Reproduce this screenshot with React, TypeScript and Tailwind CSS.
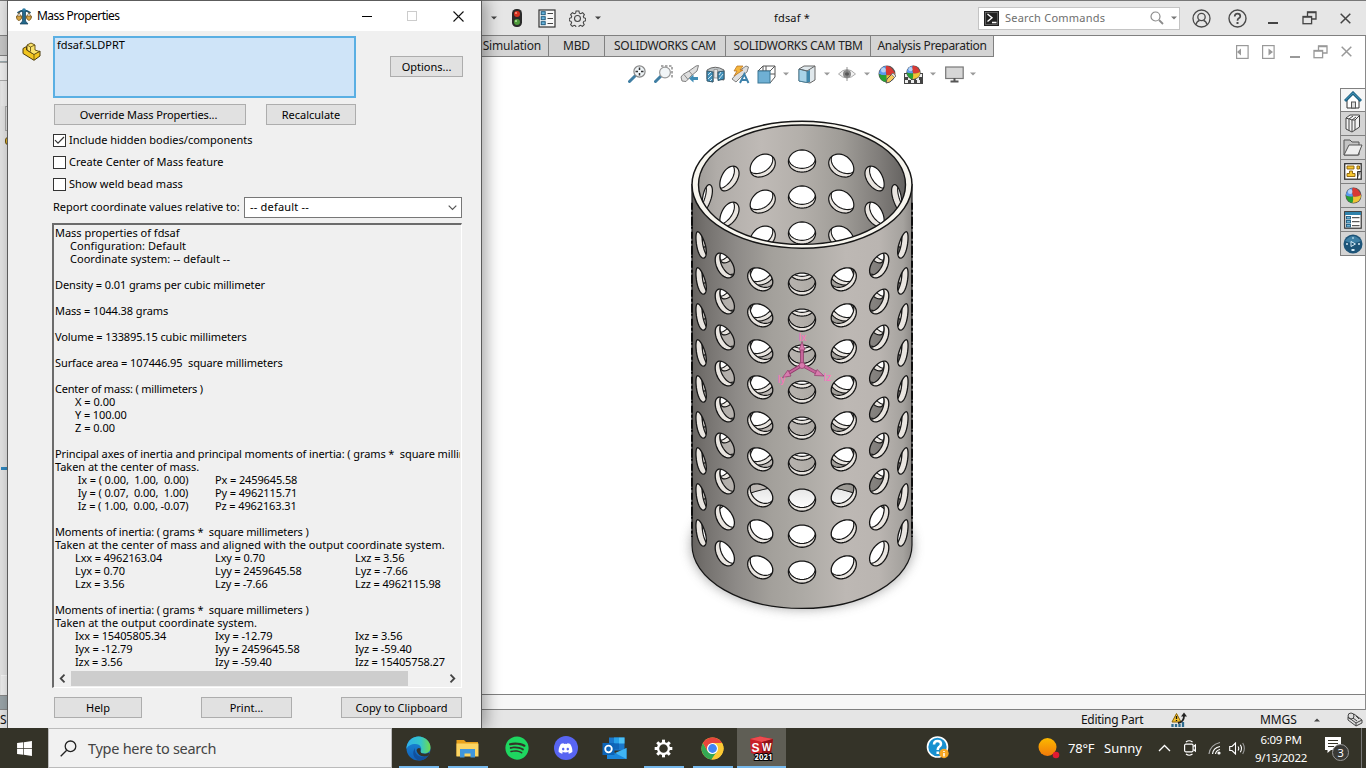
import React from "react";
import { FaWindows, FaSpotify, FaDiscord } from "react-icons/fa";

/* ---------- perforated tube geometry ---------- */
const CX = 802;
const TOP = 184.7;
const R_OUT = 110;
const R_IN = 103.5;
const TILT = 0.577;
const PITCH = 36;
const HOLE = 13.6;
const HEIGHT = 360.3;

function contour(theta: number, row: number, radius: number) {
  let d = "";
  for (let i = 0; i < 40; i++) {
    const a = (i / 40) * Math.PI * 2;
    const phi = theta + Math.asin((HOLE * Math.cos(a)) / radius);
    const x = CX + radius * Math.sin(phi);
    const y = TOP + row * PITCH + radius * TILT * Math.cos(phi) + HOLE * 0.816 * Math.sin(a);
    d += (i ? "L" : "M") + x.toFixed(2) + " " + y.toFixed(2);
  }
  return d + "Z";
}

type Hole = { key: string; outer: string; inner: string };
function holes(angles: number[]): Hole[] {
  const list: Hole[] = [];
  for (const deg of angles) {
    const t = (deg * Math.PI) / 180;
    for (let row = 1; row <= 9; row++) {
      list.push({ key: `h${deg}r${row}`.replace("-", "m").replace(".", "_"), outer: contour(t, row, R_OUT), inner: contour(t, row, R_IN) });
    }
  }
  return list;
}
const FRONT = holes([-67.5, -45, -22.5, 0, 22.5, 45, 67.5]);
const BACK = holes([112.5, 135, 157.5, 180, 202.5, 225, 247.5]);

function Tube() {
  const bottom = TOP + HEIGHT;
  const ryO = R_OUT * TILT;
  const ryI = R_IN * TILT;
  return (
    <svg className="mt-3 ml-[188px] shrink-0" width="264" height="530" viewBox="670 100 264 530">
      <defs>
        <linearGradient id="skin" x1="0" x2="1" y1="0" y2="0">
          <stop offset="0" stopColor="#65625f" />
          <stop offset="0.06" stopColor="#74716e" />
          <stop offset="0.2" stopColor="#8d8a87" />
          <stop offset="0.36" stopColor="#a3a09b" />
          <stop offset="0.52" stopColor="#aeaba6" />
          <stop offset="0.7" stopColor="#bdb8b4" />
          <stop offset="0.85" stopColor="#bab5b1" />
          <stop offset="0.96" stopColor="#a5a29e" />
          <stop offset="1" stopColor="#8d8a87" />
        </linearGradient>
        <linearGradient id="bore" x1="0" x2="1" y1="0" y2="0">
          <stop offset="0" stopColor="#9a9793" />
          <stop offset="0.12" stopColor="#b0aca8" />
          <stop offset="0.32" stopColor="#bfbab6" />
          <stop offset="0.5" stopColor="#b3afaa" />
          <stop offset="0.68" stopColor="#9f9c97" />
          <stop offset="0.85" stopColor="#7f7c79" />
          <stop offset="1" stopColor="#5c5a58" />
        </linearGradient>
        <linearGradient id="floor" x1="0" x2="0" y1="0" y2="1">
          <stop offset="0" stopColor="#e2e2e2" />
          <stop offset="0.2" stopColor="#ffffff" />
        </linearGradient>
        <filter id="soft" x="-20%" y="-30%" width="140%" height="160%">
          <feGaussianBlur stdDeviation="6" />
        </filter>
        <clipPath id="mouth">
          <ellipse cx={CX} cy={TOP} rx={R_IN} ry={ryI} />
        </clipPath>
        <clipPath id="outerSet">
          <path d={FRONT.map((h) => h.outer).join("")} />
        </clipPath>
        <clipPath id="innerSet">
          <path d={FRONT.map((h) => h.inner).join("")} />
        </clipPath>
        {BACK.map((h) => (
          <clipPath key={h.key} id={h.key}>
            <path d={h.inner} />
          </clipPath>
        ))}
        <g id="cavity">
          <rect x="690" y="120" width="224" height="490" fill="url(#bore)" />
          {BACK.map((h) => (
            <g key={h.key}>
              <path d={h.inner} fill="#e9e5e0" />
              <g clipPath={`url(#${h.key})`}>
                <path d={h.outer} fill="#fff" stroke="#161616" strokeWidth="1.1" />
              </g>
              <path d={h.inner} fill="none" stroke="#161616" strokeWidth="1.2" />
            </g>
          ))}
          <ellipse cx={CX} cy={bottom} rx={R_IN} ry={ryI} fill="url(#floor)" stroke="#161616" strokeWidth="1.1" />
        </g>
      </defs>

      <ellipse cx={CX} cy={bottom + 1} rx="111" ry="63" fill="#8a8a8a" opacity="0.75" filter="url(#soft)" />
      <path
        d={`M${CX - R_OUT} ${TOP}V${bottom}A${R_OUT} ${ryO} 0 0 0 ${CX + R_OUT} ${bottom}V${TOP}Z`}
        fill="url(#skin)"
        stroke="#161616"
        strokeWidth="1.2"
      />
      <path d={`M${CX - R_OUT} ${TOP + 18}V${bottom - 8}M${CX + R_OUT} ${TOP + 18}V${bottom - 8}`} stroke="#0c0c0c" strokeWidth="1.9" strokeDasharray="7 2 3 2 9 1 2 3" />
      <ellipse cx={CX} cy={TOP} rx={R_OUT} ry={ryO} fill="#f7f5ee" stroke="#161616" strokeWidth="1.5" />
      <g clipPath="url(#mouth)">
        <use href="#cavity" />
      </g>
      <ellipse cx={CX} cy={TOP} rx={R_IN} ry={ryI} fill="none" stroke="#161616" strokeWidth="1.4" />

      <path d={FRONT.map((h) => h.outer).join("")} fill="#e9e5e0" />
      <g clipPath="url(#outerSet)">
        <g clipPath="url(#innerSet)">
          <use href="#cavity" />
        </g>
        <path d={FRONT.map((h) => h.inner).join("")} fill="none" stroke="#161616" strokeWidth="1.2" />
      </g>
      <path d={FRONT.map((h) => h.outer).join("")} fill="none" stroke="#161616" strokeWidth="1.3" />

      <g stroke="#8f3768" strokeWidth="3.6">
        <path d="M802 365V349M802 365L787 374M802 365L817 373" />
      </g>
      <g stroke="#c7659c" strokeWidth="2">
        <path d="M802 365V349M802 365L787 374M802 365L817 373" />
      </g>
      <g fill="#d87bae" stroke="#8f3768" strokeWidth="0.7">
        <path d="M799 350L802 341.500L805 350Z" />
        <path d="M788 370L791 376L782.500 377.500Z" />
        <path d="M817 369.500L814.500 375.500L824 376Z" />
        <circle cx="802" cy="365.500" r="3" />
      </g>
      <g fill="#ff6fc0" fontFamily="Liberation Sans, sans-serif" fontSize="10">
        <text x="798.500" y="340.500">Ix</text>
        <text x="777.500" y="383">Iy</text>
        <text x="823.500" y="381">Iz</text>
      </g>
    </svg>
  );
}

/* ---------- small shared pieces ---------- */
function Caret({ className = "", up = false, fill = "#555" }: { className?: string; up?: boolean; fill?: string }) {
  return (
    <svg className={className} width="6" height="4" viewBox="0 0 6 4">
      <path d={up ? "M0 3.500L3 0.500L6 3.500Z" : "M0 0.500L3 3.500L6 0.500Z"} fill={fill} />
    </svg>
  );
}

function Ball({ size = 18, cx = 0 }: { size?: number; cx?: number }) {
  return (
    <svg width={size} height={size} viewBox="0 0 18 18">
      <circle cx="9" cy="9" r="8.500" fill="#555" />
      <path d="M8 1A8 8 0 0 0 1 9Q5 11 8.500 10Q7 5 8 1Z" fill="#5b9bee" />
      <path d="M8 1Q13 0 17 8.500Q13 11 8.500 10Q7 5 8 1Z" fill="#d93a35" />
      <path d="M1 9Q5 11 8.500 10Q9 14 8 17Q2 16 1 9Z" fill="#27a234" />
      <path d="M8 17Q9 14 8.500 10Q13 11 17 8.500Q17 16 8 17Z" fill="#f0c436" />
      <circle cx={5.5 + cx} cy="5" r="2.500" fill="#fff" opacity="0.55" />
    </svg>
  );
}

function Cell({ w, children }: { w: string; children?: React.ReactNode }) {
  return <div className={`flex h-full shrink-0 items-center justify-center ${w}`}>{children}</div>;
}

const Lens = () => <path d="M7 11L1.500 16.500" stroke="#3f7ea3" strokeWidth="3" strokeLinecap="round" />;

/* ---------- application window ---------- */
function TitleBar() {
  return (
    <header className="flex h-9 shrink-0 items-center border-t border-b border-t-[#777] border-b-[#808080] bg-[#e6e6e6] pl-[484px]">
      <Cell w="w-[20px]"><Caret fill="#444" /></Cell>
      <Cell w="w-[26px]">
        <svg width="12" height="20" viewBox="0 0 12 20">
          <rect x="1" y="1" width="10" height="18" rx="4.500" fill="#2b2b2b" />
          <circle cx="6" cy="6" r="3" fill="#d5311f" />
          <circle cx="6" cy="14" r="3" fill="#4d9a3a" />
          <circle cx="5" cy="5" r="1" fill="#ff9a85" /><circle cx="5" cy="13" r="1" fill="#b8e59f" />
        </svg>
      </Cell>
      <Cell w="w-[34px]">
        <svg width="18" height="19" viewBox="0 0 18 19">
          <rect x="1" y="1" width="16" height="17" fill="#f8f8f8" stroke="#333" strokeWidth="1.200" />
          {[3, 8, 13].map((y) => (
            <g key={y}>
              <rect x="3.200" y={y - 0.3} width="4" height="3" fill="#68b3dc" stroke="#1f5a7d" />
              <path d={`M9.500 ${y + 1.5}H15`} stroke="#444" />
            </g>
          ))}
        </svg>
      </Cell>
      <Cell w="w-[26px]">
        <svg width="17" height="17" viewBox="0 0 24 24" fill="none" stroke="#444" strokeWidth="1.500">
          <path d="M10 1.500h4l.7 3 1.800.8 2.700-1.500 2.500 2.700-1.500 2.600.8 1.900 2.500.8v3.400l-2.600.8-.8 1.900 1.400 2.700-2.500 2.500-2.700-1.500-1.900.8-.8 2.600h-3.600l-.7-2.600-1.900-.8-2.700 1.500-2.400-2.500 1.400-2.700-.8-1.900-2.500-.8v-3.400l2.600-.8.8-1.900-1.500-2.600 2.500-2.700 2.700 1.500 1.800-.8z" />
          <circle cx="12" cy="12" r="4.200" />
        </svg>
      </Cell>
      <Cell w="w-[16px]"><Caret fill="#444" /></Cell>
      <div className="flex w-[372px] justify-center pl-0 text-[11px] tracking-[0.2px] text-[#111]">fdsaf *</div>
      <div className="flex h-[23px] w-[202px] items-center border border-[#c4c4c4] bg-white pl-[5px]">
        <svg width="15" height="15" viewBox="0 0 15 15">
          <rect width="15" height="15" fill="#222" />
          <rect x="1.500" y="1.500" width="12" height="12" fill="none" stroke="#777" strokeWidth="0.700" />
          <path d="M3.500 3L8 6.700L3.500 10.500M8 11.500H12.500" stroke="#fff" strokeWidth="1.400" fill="none" />
        </svg>
        <span className="ml-[6px] w-[145px] text-[11px] tracking-[0.220px] text-[#6e6e6e]">Search Commands</span>
        <svg width="14" height="14" viewBox="0 0 14 14" fill="none" stroke="#8b8b8b" strokeWidth="1.200">
          <circle cx="5.500" cy="5.500" r="4.500" /><path d="M9 9L13 13" strokeWidth="1.800" />
        </svg>
        <Caret className="ml-[7px]" fill="#777" />
      </div>
      <Cell w="w-[42px]">
        <svg width="19" height="19" viewBox="0 0 19 19" fill="none" stroke="#4a4a4a" strokeWidth="1.300">
          <circle cx="9.500" cy="9.500" r="8.500" /><circle cx="9.500" cy="8" r="3.700" /><path d="M4 15.500Q5 12 7.500 11.500M15 15.500Q14 12 11.500 11.500" />
        </svg>
      </Cell>
      <Cell w="w-[30px]">
        <svg width="19" height="19" viewBox="0 0 19 19" fill="none" stroke="#4a4a4a" strokeWidth="1.400">
          <circle cx="9.500" cy="9.500" r="8.500" /><path d="M6.700 7.500Q6.700 4.700 9.500 4.700T12.300 7.200Q12.300 8.500 10.500 9.500Q9.500 10.200 9.500 11.700" strokeWidth="1.700" /><path d="M9.500 13V15" strokeWidth="2" />
        </svg>
      </Cell>
      <Cell w="w-[42px]"><div className="mt-[10px] h-[2px] w-[10px] bg-[#444]" /></Cell>
      <Cell w="w-[31px]"><Restore color="#444" /></Cell>
      <Cell w="w-[40px]"><Cross color="#444" /></Cell>
    </header>
  );
}

function Restore({ color }: { color: string }) {
  return (
    <svg width="15" height="14" viewBox="0 0 15 14" fill="none" stroke={color} strokeWidth="1.300">
      <path d="M5.500 5V1H14V8H9.800" /><rect x="1" y="5.500" width="8.600" height="7.200" /><path d="M5.500 1.500H14M1 6H9.600" />
    </svg>
  );
}
function Cross({ color }: { color: string }) {
  return (
    <svg width="11" height="11" viewBox="0 0 11 11" stroke={color} strokeWidth="1.500"><path d="M0.700 0.700L10.300 10.300M10.300 0.700L0.700 10.300" /></svg>
  );
}

function Tabs() {
  const tab = "flex h-full items-center justify-center border-r border-b border-[#808080] bg-[#d4d4d4] text-[12px] text-[#222] whitespace-nowrap";
  return (
    <div className="flex h-[21px] shrink-0">
      <div className={`${tab} w-[67px] justify-end! pr-[7px] tracking-[-0.2px]`}>Simulation</div>
      <div className={`${tab} w-[56px] tracking-[-0.2px]`}>MBD</div>
      <div className={`${tab} w-[121px] tracking-[-0.3px]`}>SOLIDWORKS CAM</div>
      <div className={`${tab} w-[145px] tracking-[-0.300px]`}>SOLIDWORKS CAM TBM</div>
      <div className={`${tab} w-[123px] tracking-[-0.3px]`}>Analysis Preparation</div>
      <div className="ml-[241px] flex items-start pt-[10px]">
        <Cell w="w-[15px]">
          <svg width="13" height="14" viewBox="0 0 13 14"><rect x="0.600" y="0.600" width="11.500" height="12.800" fill="none" stroke="#999" strokeWidth="1.200" /><path d="M1 7L5 3.500V10.500Z" fill="#999" /></svg>
        </Cell>
        <Cell w="w-[37px]">
          <svg width="13" height="14" viewBox="0 0 13 14"><rect x="0.600" y="0.600" width="11.500" height="12.800" fill="none" stroke="#999" strokeWidth="1.200" /><path d="M11 7L6.500 3.500V10.500Z" fill="#999" /></svg>
        </Cell>
        <Cell w="w-[15px]"><div className="mt-[11px] h-[2px] w-[10px] bg-[#999]" /></Cell>
        <Cell w="w-[37px]"><Restore color="#999" /></Cell>
        <Cell w="w-[14px]"><Cross color="#999" /></Cell>
      </div>
    </div>
  );
}

function ViewToolbar() {
  return (
    <div className="flex h-[31px] shrink-0 items-center pb-0 pl-[142px] pt-[3px]">
      <Cell w="w-[26px]">
        <svg width="18" height="18" viewBox="0 0 18 18" fill="none"><Lens /><circle cx="11.500" cy="6.500" r="5.600" fill="#eef3f6" stroke="#888" strokeWidth="1.200" /><path d="M11.500 2.500V5M11.500 8V10.500M7.500 6.500H10M13 6.500H15.500" stroke="#333" strokeWidth="1.500" /></svg>
      </Cell>
      <Cell w="w-[26px]">
        <svg width="19" height="19" viewBox="0 0 19 19" fill="none"><path d="M7 1H18V13" stroke="#555" strokeDasharray="2.500 1.500" /><Lens /><circle cx="11" cy="7.500" r="5.400" fill="#f1f5f7" stroke="#999" strokeWidth="1.200" /></svg>
      </Cell>
      <Cell w="w-[26px]">
        <svg width="19" height="19" viewBox="0 0 19 19"><path d="M1 12L3 9.500L9 6L16 1L18.500 0.500L17 6L11 11L6 16.500L2 16Z" fill="#dedede" stroke="#808080" /><path d="M4 9.500L8 14.500M9 6L12.500 10" stroke="#888" /><path d="M18 12V15H13.500V17.500L9 13.500L13.500 9.500V12Z" fill="#3f8cb5" /></svg>
      </Cell>
      <Cell w="w-[26px]">
        <svg width="19" height="17" viewBox="0 0 19 17"><path d="M1 4Q9 -1.500 18 4V14L12 13V6H7V16L1 13Z" fill="#bfc5c8" stroke="#666" /><path d="M8 3.500H11.500V12H8Z" fill="#e6e6e6" stroke="#888" strokeWidth="0.700" /><path d="M1 5L7 6V16L1 15Z" fill="#4191bb" stroke="#35596c" /><path d="M12 6L18 5V13L12 14.500Z" fill="#4191bb" stroke="#35596c" /><path d="M2 9L5 6M2 13L6 9M4 15L6 13M13 9L15 6M13 13L17 8" stroke="#cfe6f2" /></svg>
      </Cell>
      <Cell w="w-[25px]">
        <svg width="19" height="19" viewBox="0 0 19 19"><path d="M1 14L8 6L15 1L17.500 2L16 7L11 11L5 17Z" fill="#dedede" stroke="#808080" /><path d="M6 1H12L9 5H12L3 11L6 6H3Z" fill="#f4b53c" stroke="#b36b1c" strokeWidth="0.700" /><path d="M9 18L13.300 9L17.500 18M10.500 15H16" fill="none" stroke="#3c81aa" strokeWidth="1.900" /></svg>
      </Cell>
      <Cell w="w-[27px]">
        <svg width="19" height="19" viewBox="0 0 19 19" fill="none"><path d="M1 6L6 1H18V12L13 18M6 1V6M1 6H13L18 1M9 1V9M13 9H18" stroke="#555" /><rect x="1" y="6" width="12" height="12" fill="#6fb0d4" stroke="#3b7795" /></svg>
      </Cell>
      <Cell w="w-[12px]"><Caret fill="#999" /></Cell>
      <Cell w="w-[30px]">
        <svg width="18" height="19" viewBox="0 0 18 19"><path d="M1 4L6 1H17V15L12 18L1 16Z" fill="#e0e8ec" stroke="#666" /><path d="M1 4L9 6V17.500L1 16Z" fill="#a9d3e8" stroke="#467e99" /><path d="M9 6L12 5V17L9 17.500Z" fill="#3f86ab" /><path d="M1 4L9 6L17 1" fill="none" stroke="#666" /></svg>
      </Cell>
      <Cell w="w-[10px]"><Caret fill="#999" /></Cell>
      <Cell w="w-[30px]">
        <svg width="18" height="14" viewBox="0 0 18 14"><path d="M0.500 7Q9 -2 17.500 7Q9 15 0.500 7Z" fill="#f1f1f1" stroke="#aaa" /><circle cx="9" cy="7" r="4" fill="#888" /><circle cx="9" cy="7" r="1.800" fill="#444" /><path d="M9 0V14" stroke="#777" strokeWidth="0.800" /></svg>
      </Cell>
      <Cell w="w-[10px]"><Caret fill="#999" /></Cell>
      <Cell w="w-[30px]">
        <div className="relative"><Ball size={18} />
          <svg className="absolute left-[7px] top-[7px]" width="12" height="12" viewBox="0 0 12 12"><path d="M1 11L2 7L8 1L11 4L5 10Z" fill="#f6c95c" stroke="#555" /><path d="M8 1L11 4L9.500 5.500L6.500 2.500Z" fill="#e8e0d8" stroke="#666" strokeWidth="0.600" /></svg>
        </div>
      </Cell>
      <Cell w="w-[23px]">
        <div className="relative h-[19px] w-[19px]">
          <svg className="absolute left-0 top-[8px]" width="19" height="11" viewBox="0 0 19 11"><rect width="19" height="11" fill="#444" /><path d="M1 1H4V4H1ZM4 4H7V7H4ZM1 7H4V10H1ZM7 7H10V10H7ZM13 7H16V10H13ZM12 4H15V7H12ZM15 1H18V4H15Z" fill="#eee" /></svg>
          <div className="absolute left-[2px] top-0"><Ball size={15} /></div>
        </div>
      </Cell>
      <Cell w="w-[16px]"><Caret fill="#999" /></Cell>
      <Cell w="w-[26px]">
        <svg width="19" height="17" viewBox="0 0 19 17"><rect x="0.700" y="1" width="17.500" height="11.500" fill="#d6d6d6" stroke="#777" strokeWidth="1.200" /><path d="M9.500 12V15M5.500 15.500H13.500" stroke="#555" strokeWidth="2" /></svg>
      </Cell>
      <Cell w="w-[12px]"><Caret fill="#999" /></Cell>
    </div>
  );
}

function TaskPane() {
  const cell = "flex h-[24px] w-full items-center justify-center border-b border-[#808080] bg-[#d4d4d4]";
  return (
    <div className="ml-auto flex w-[25px] flex-col self-start border-t border-l border-[#808080]">
      <div className="flex h-[23px] w-full items-center justify-center border-b border-[#808080] bg-[#f6f6f6]">
        <svg width="18" height="18" viewBox="0 0 18 18"><path d="M3 9V17H15V9L9 3Z" fill="#fff" stroke="#333" /><rect x="7.500" y="11" width="4" height="6" fill="#ddd" stroke="#555" /><path d="M1 10L9 2L17 10" fill="none" stroke="#1b5f80" strokeWidth="3" /><path d="M1.500 9L9 1.800L16.500 9" fill="none" stroke="#4fa5cb" strokeWidth="0.900" /></svg>
      </div>
      <div className={cell}>
        <svg width="16" height="19" viewBox="0 0 16 19" fill="#f2f2f2" stroke="#444"><path d="M1 4L5 1H14.500V13L7 18L1 15Z" /><path d="M1 4L4 5V16.500M4 5L8 2M4.500 5L7 6V17.500M7 6L11 3M7.500 6H10V16M10 6L14.500 1.500" fill="none" /></svg>
      </div>
      <div className={cell}>
        <svg width="20" height="17" viewBox="0 0 20 17" stroke="#555" strokeLinejoin="round"><path d="M1 16V1H7L9 3H16V16Z" fill="#c4c4c4" /><path d="M1 16L6 6H19L15 16Z" fill="#eee" /></svg>
      </div>
      <div className={cell}>
        <svg width="18" height="17" viewBox="0 0 18 17"><rect x="0.700" y="0.700" width="16.500" height="15.500" fill="#fff" stroke="#333" strokeWidth="1.300" /><path d="M3 3H10V6H3ZM13 3H15.500V6H13ZM5.500 8H8.500V10.500H11V13.500H3V10.500H5.500Z" fill="#f6c730" stroke="#88600c" strokeWidth="0.900" /><path d="M13.500 16V8.500H17" fill="#888" stroke="#333" /></svg>
      </div>
      <div className={cell}><Ball size={17} /></div>
      <div className={cell}>
        <svg width="18" height="18" viewBox="0 0 18 18"><rect x="0.700" y="0.700" width="16.500" height="16.500" fill="#fff" stroke="#333" strokeWidth="1.200" /><rect x="1" y="1" width="16" height="3" fill="#2f82ab" />{[6, 10, 14].map((y) => <g key={y}><rect x="2.500" y={y - 0.5} width="4" height="2.500" fill="#6db7da" stroke="#1f5a7d" strokeWidth="0.900" /><path d={`M8 ${y + 0.7}H15.500`} stroke="#333" /></g>)}</svg>
      </div>
      <div className={cell}>
        <svg width="20" height="20" viewBox="0 0 20 20"><circle cx="10" cy="10" r="9.500" fill="#1d5478" /><path d="M2 7Q10 -3 18 7Q10 11 2 7Z" fill="#4c91b8" opacity="0.700" /><path d="M8 7.500V12.500L12.500 10Z" fill="none" stroke="#d4eaf5" /><circle cx="4" cy="10" r="1" fill="#d4eaf5" /><circle cx="16" cy="10" r="1" fill="#d4eaf5" /><rect x="8.500" y="15" width="3" height="2" fill="#d4eaf5" /><circle cx="10" cy="4" r="1" fill="#a9cfe2" /></svg>
      </div>
    </div>
  );
}

function LeftEdge() {
  return (
    <div className="flex w-[482px] shrink-0 flex-col bg-[#e4e4e4]">
      <div className="h-[21px] border-b border-[#808080] bg-[#c6c6c6]" />
      <div className="h-[6px] border-b border-[#9aa9ae] bg-[#eaeaea]" />
      <div className="h-[20px] border-t border-b border-[#aaa] bg-[#eee]" />
      <div className="ml-[1px] h-[26px] bg-[#eaeaea]" />
      <div className="ml-[5px] h-[26px] border border-[#aaa] bg-[#e0e0e0]" />
      <div className="mt-[6px] ml-[5px] h-[8px] w-[6px] rounded-full border border-[#6a5210] bg-[#e5b62c]" />
      <div className="mt-[322px] ml-[1px] h-[3px] bg-[#2f86bd]" />
      <div className="mt-[205px] ml-[1px] h-[21px] border-t border-[#f8f8f8] bg-[#eee]" />
      <div className="h-[16px] border-t border-b border-[#888] bg-[#9aa4a8]" />
    </div>
  );
}

function StatusBar() {
  return (
    <div className="flex h-[18px] shrink-0 items-center bg-[#e5e5e5] pt-px text-[12px] text-[#111]">
      <span className="w-[1081px]">S</span>
      <span className="w-[90px] tracking-[-0.300px]">Editing Part</span>
      <svg width="16" height="16" viewBox="0 0 16 16"><path d="M1 10L5.500 1.500L10 10Z" fill="#f5c32c" stroke="#8a650a" /><path d="M5.500 4V7M5.500 8V9" stroke="#111" strokeWidth="1.300" /><path d="M7 11Q13 10 13 4" fill="none" stroke="#222" strokeWidth="1.800" /><path d="M10 4.500L13 0.500L16 4.500Z" fill="#222" /><path d="M1.500 12V15M5 12V15M8.500 12V15M12 10V15" stroke="#2e6d90" strokeWidth="2.300" /></svg>
      <span className="ml-[73px] w-[54px] tracking-[-0.100px]">MMGS</span>
      <Caret up fill="#444" />
      <svg className="ml-[27px]" width="16" height="15" viewBox="0 0 16 15" fill="#ddd" stroke="#444"><path d="M1 5L7 2L15 8V11L9 14L1 8Z" /><circle cx="4" cy="4" r="3" /><path d="M1 5L9 11L15 8M9 11V14M6 6L10 9M9 4L12 7" fill="none" /></svg>
    </div>
  );
}

/* ---------- mass properties dialog ---------- */
function Btn({ className, children }: { className: string; children: React.ReactNode }) {
  return (
    <button className={`flex h-[21px] shrink-0 items-center justify-center border border-[#adadad] bg-[#e1e1e1] pt-[1px] ${className}`}>
      <span className="whitespace-nowrap">{children}</span>
    </button>
  );
}

function Check({ label, on = false }: { label: string; on?: boolean }) {
  return (
    <label className="flex h-[22px] items-center">
      <span className="flex h-[13px] w-[13px] items-center justify-center border border-[#333] bg-white">
        {on && <svg width="11" height="9" viewBox="0 0 11 9"><path d="M1 4.200L4 7.200L10 1" fill="none" stroke="#333" strokeWidth="1.200" /></svg>}
      </span>
      <span className="ml-[3px]">{label}</span>
    </label>
  );
}

const L = ({ t, className = "tracking-[-0.1px]" }: { t?: string; className?: string }) => (
  <div className={`h-[13px] whitespace-pre leading-[13px] ${className}`}>{t}</div>
);
const Row3 = ({ a, b, c }: { a: string; b: string; c: string }) => (
  <div className="grid h-[13px] grid-cols-[140px_140px_140px] pl-[20px] leading-[13px] tracking-[-0.12px]">
    <span className="whitespace-pre">{a}</span><span>{b}</span><span>{c}</span>
  </div>
);

function Report() {
  return (
    <div className="flex h-[465px] w-[410px] flex-col border-t-2 border-l-2 border-r border-b border-t-[#6b6b6b] border-l-[#6b6b6b] border-r-white border-b-white">
      <div className="h-[445px] w-[406px] overflow-hidden pt-[1px] pl-[1px]">
        <L t="Mass properties of fdsaf" className="tracking-[-0.02px]" />
        <L t="Configuration: Default" className="pl-[15px] tracking-[0.05px]" />
        <L t="Coordinate system: -- default --" className="pl-[15px] tracking-[0.03px]" />
        <L />
        <L t="Density = 0.01 grams per cubic millimeter" />
        <L />
        <L t="Mass = 1044.38 grams" />
        <L />
        <L t="Volume = 133895.15 cubic millimeters" />
        <L />
        <L t="Surface area = 107446.95  square millimeters" />
        <L />
        <L t="Center of mass: ( millimeters )" className="tracking-[-0.2px]" />
        <L t="X = 0.00" className="pl-[20px]" />
        <L t="Y = 100.00" className="pl-[20px] tracking-[-0.1px]" />
        <L t="Z = 0.00" className="pl-[20px]" />
        <L />
        <L t="Principal axes of inertia and principal moments of inertia: ( grams *  square millimeters )" />
        <L t="Taken at the center of mass." className="tracking-[-0.03px]" />
        <Row3 a=" Ix = ( 0.00,  1.00,  0.00)" b="Px = 2459645.58" c="" />
        <Row3 a=" Iy = ( 0.07,  0.00,  1.00)" b="Py = 4962115.71" c="" />
        <Row3 a=" Iz = ( 1.00,  0.00, -0.07)" b="Pz = 4962163.31" c="" />
        <L />
        <L t="Moments of inertia: ( grams *  square millimeters )" className="tracking-[-0.14px]" />
        <L t="Taken at the center of mass and aligned with the output coordinate system." className="tracking-normal" />
        <Row3 a="Lxx = 4962163.04" b="Lxy = 0.70" c="Lxz = 3.56" />
        <Row3 a="Lyx = 0.70" b="Lyy = 2459645.58" c="Lyz = -7.66" />
        <Row3 a="Lzx = 3.56" b="Lzy = -7.66" c="Lzz = 4962115.98" />
        <L />
        <L t="Moments of inertia: ( grams *  square millimeters )" className="tracking-[-0.14px]" />
        <L t="Taken at the output coordinate system." className="tracking-normal" />
        <Row3 a="Ixx = 15405805.34" b="Ixy = -12.79" c="Ixz = 3.56" />
        <Row3 a="Iyx = -12.79" b="Iyy = 2459645.58" c="Iyz = -59.40" />
        <Row3 a="Izx = 3.56" b="Izy = -59.40" c="Izz = 15405758.27" />
      </div>
      <div className="flex h-[16px] items-center justify-between pr-[5px] pl-[5px]">
        <svg width="7" height="9" viewBox="0 0 7 9"><path d="M5.500 0.700L1.700 4.500L5.500 8.300" fill="none" stroke="#444" strokeWidth="1.800" /></svg>
        <div className="mr-[36px] h-[15px] w-[337px] bg-[#cdcdcd]" />
        <svg width="7" height="9" viewBox="0 0 7 9"><path d="M1.500 0.700L5.300 4.500L1.500 8.300" fill="none" stroke="#444" strokeWidth="1.800" /></svg>
      </div>
    </div>
  );
}

function Dialog() {
  return (
    <section className="absolute top-0 left-[7px] flex h-[728px] w-[475px] flex-col border-x border-t border-[#5c5c5c] bg-[#f0f0f0] text-[11px] text-black shadow-[4px_0_14px_1px_rgba(0,0,0,0.32)]">
      <div className="flex h-[30px] shrink-0 items-center bg-white pl-[8px]">
        <svg width="16" height="17" viewBox="0 0 16 17"><path d="M6.500 3H9.500V13L12 16H4L6.500 13Z" fill="#24698c" stroke="#153e54" strokeWidth="0.700" /><path d="M1.500 5Q8 0 14.500 5" fill="none" stroke="#1d526f" strokeWidth="1.800" /><circle cx="8" cy="2" r="1.800" fill="#2d7da5" /><path d="M3 4.500L0.500 10H6ZM13 4.500L10 10H15.500Z" fill="none" stroke="#7c6332" strokeWidth="0.800" /><path d="M0.500 8H6Q5.500 12.500 3 12.500T0.500 8ZM10 8H15.500Q15 12.500 13 12.500T10 8Z" fill="#d6a545" stroke="#6a4c17" strokeWidth="0.700" /></svg>
        <span className="ml-[5px] w-[325px] text-[12px] tracking-[-0.530px]">Mass Properties</span>
        <div className="h-[1px] w-[10px] bg-black" />
        <div className="ml-[35px] h-[10px] w-[10px] border border-[#ccc]" />
        <svg className="ml-[36px]" width="11" height="11" viewBox="0 0 11 11" stroke="#111" strokeWidth="1.100"><path d="M0.500 0.500L10.500 10.500M10.500 0.500L0.500 10.500" /></svg>
      </div>
      <div className="flex pt-[5px]">
        <div className="w-[45px] pt-[6px] pl-[14px]">
          <svg width="19" height="19" viewBox="0 0 19 19" strokeLinejoin="round"><path d="M1 6.500L4.500 4.500V8L8 10L11.500 12L18 9V14L12 18.300L1 11.500Z" fill="#f2c51f" stroke="#4a3a0c" /><path d="M5 3L9 1L13 3V8L17.500 9.500L12 12.500L5 8Z" fill="#fbe36b" stroke="#5b470d" strokeWidth="0.900" /><path d="M5 3L8.500 5L13 3M8.500 5V9.500M12 12.500V18" fill="none" stroke="#5b470d" strokeWidth="0.800" /></svg>
        </div>
        <div className="h-[62px] w-[303px] border-2 border-[#5aafe3] bg-[#cfe4f8] pl-[2px] leading-[13px]">fdsaf.SLDPRT</div>
        <Btn className="mt-[20px] ml-[34px] w-[73px]">Options...</Btn>
      </div>
      <div className="flex pt-[6px] pl-[46px]">
        <Btn className="w-[192px] pr-[3px] tracking-[-0.09px]">Override Mass Properties...</Btn>
        <Btn className="ml-[20px] w-[90px]">Recalculate</Btn>
      </div>
      <div className="mt-[4px] pl-[45px]">
        <Check label="Include hidden bodies/components" on />
        <Check label="Create Center of Mass feature" />
        <Check label="Show weld bead mass" />
        <div className="mt-[2px] flex items-center">
          <span className="w-[191px] whitespace-nowrap">Report coordinate values relative to:</span>
          <div className="flex h-[21px] w-[218px] items-center justify-between border border-[#777] bg-white pr-[4px] pl-[5px] tracking-[0.2px]">
            -- default --
            <svg width="9" height="6" viewBox="0 0 9 6"><path d="M0.700 0.700L4.500 4.500L8.300 0.700" fill="none" stroke="#555" strokeWidth="1.200" /></svg>
          </div>
        </div>
      </div>
      <div className="mt-[5px] pl-[44px]"><Report /></div>
      <div className="mt-[9px] flex pl-[46px]">
        <Btn className="w-[88px]">Help</Btn>
        <Btn className="ml-[59px] w-[91px]">Print...</Btn>
        <Btn className="ml-[49px] w-[121px]">Copy to Clipboard</Btn>
      </div>
    </section>
  );
}

/* ---------- taskbar ---------- */
function TaskApp({ run = false, active = false, children }: { run?: boolean; active?: boolean; children: React.ReactNode }) {
  return (
    <div className={`flex h-[40px] w-[49px] flex-col items-center ${active ? "bg-[#5f5e55]" : ""}`}>
      <div className="flex h-[38px] items-center justify-center pt-[2px]">{children}</div>
      <div className={`h-[2px] ${active ? "w-full" : "w-[40px]"} ${run ? "bg-[#76b9ed]" : ""}`} />
    </div>
  );
}

function Taskbar() {
  return (
    <footer className="flex h-[40px] shrink-0 items-center bg-[#343328] text-white">
      <Cell w="w-[48px]"><FaWindows size={17} color="#fff" /></Cell>
      <div className="flex h-[40px] w-[344px] items-center border border-[#bbb] bg-[#f1f1f1] pl-[11px]">
        <svg width="17" height="17" viewBox="0 0 17 17" fill="none" stroke="#222" strokeWidth="1.300"><circle cx="10.500" cy="6.300" r="5.300" /><path d="M6.700 10.200L0.700 16.200" /></svg>
        <span className="ml-[11px] pt-[1px] text-[14.500px] tracking-[-0.280px] text-[#444]">Type here to search</span>
      </div>
      <div className="ml-[2px] flex">
        <TaskApp run>
          <svg width="25" height="25" viewBox="0 0 25 25">
            <defs>
              <linearGradient id="eg" x1="0" x2="1"><stop offset="0" stopColor="#2fb0ea" /><stop offset="0.600" stopColor="#35c6c8" /><stop offset="1" stopColor="#6fdc4b" /></linearGradient>
              <linearGradient id="eb" x1="0" x2="0" y1="0" y2="1"><stop offset="0" stopColor="#1b8bd8" /><stop offset="1" stopColor="#1060b8" /></linearGradient>
            </defs>
            <circle cx="12.500" cy="12.500" r="12" fill="url(#eb)" />
            <path d="M0.500 11C2 4 7 0.500 12.500 0.500C19 0.500 24.500 5.500 24.500 11.500C24.500 15 22 17.500 18.500 17.500C15.500 17.500 14 16.500 14.500 15.500C16.500 12.500 14.500 8 9.500 8C5 8 1.500 10 0.500 13Z" fill="url(#eg)" />
            <path d="M9 12C8 17 12 21.500 18 21C20 20.800 21.500 20 23 18.500C20.500 23 17 24.500 13 24.500C7.500 23 5.500 17 9 12Z" fill="#12509c" />
            <path d="M14.500 15.500C15 18 19 18.500 23.500 16.500L22.500 19.500C17 22 11.500 19.500 10.500 14Q12 11 14.500 12.500Z" fill="#343328" />
          </svg>
        </TaskApp>
        <TaskApp run>
          <svg width="23" height="19" viewBox="0 0 23 19"><path d="M0.500 1H8L10 3H22V17H0.500Z" fill="#e8a21c" /><path d="M0.500 4.500H22.500V17.500H0.500Z" fill="#fbd564" /><path d="M4 18.500V10H19V18.500H14.500V14.500H8.500V18.500Z" fill="#3f96dd" /></svg>
        </TaskApp>
        <TaskApp><FaSpotify size={24} color="#1ed760" /></TaskApp>
        <TaskApp><div className="flex h-[24px] w-[24px] items-center justify-center rounded-full bg-[#5865f2]"><FaDiscord size={15} color="#fff" /></div></TaskApp>
        <TaskApp>
          <svg width="25" height="23" viewBox="0 0 25 23"><rect x="7" y="0.500" width="15.500" height="13" fill="#1a78cc" /><rect x="12" y="0.500" width="5" height="6" fill="#28a1e8" /><rect x="17" y="0.500" width="5.500" height="6" fill="#4cc1f5" /><rect x="12" y="6.500" width="5" height="6" fill="#1066b8" /><path d="M5 11L14.500 17L24.500 11V22H5Z" fill="#1b86da" /><path d="M24.500 11V22L13 16Z" fill="#3fb4f3" /><rect x="0.500" y="6" width="12" height="12" fill="#0c64b7" /><circle cx="6.500" cy="12" r="3.300" fill="none" stroke="#fff" strokeWidth="1.800" /></svg>
        </TaskApp>
        <TaskApp run>
          <svg width="19" height="19" viewBox="0 0 20 20" fill="none" stroke="#fff"><circle cx="10" cy="10" r="5.700" strokeWidth="2.400" /><g strokeWidth="3.200">{[0, 45, 90, 135, 180, 225, 270, 315].map((a) => <path key={a} d="M10 0.700V4.200" transform={`rotate(${a} 10 10)`} />)}</g></svg>
        </TaskApp>
        <TaskApp run>
          <svg width="23" height="23" viewBox="0 0 23 23"><circle cx="11.500" cy="11.500" r="11" fill="#fcc934" /><path d="M1.970 6A11 11 0 0 0 10.500 22.450L16.300 14.200L11.500 11.500L6.700 14.200Z" fill="#34a853" /><path d="M11.500 6H21.030A11 11 0 0 1 10.500 22.450L16.300 14.300Z" fill="#fcc934" /><path d="M1.970 6A11 11 0 0 1 21.030 6H11.500L6.700 14.200Z" fill="#e8453c" /><circle cx="11.500" cy="11.500" r="5.500" fill="#fff" /><circle cx="11.500" cy="11.500" r="4.400" fill="#4285f4" /></svg>
        </TaskApp>
        <TaskApp run active>
          <svg width="25" height="25" viewBox="0 0 25 25"><path d="M1 3L11 0.500L24 3L22 17L13 20L2 17Z" fill="#c91f28" /><path d="M1 3L13 6L24 3L11 0.500Z" fill="#ee4b4f" /><path d="M13 6L24 3L22 17L13 20Z" fill="#8f1118" /><text x="2.500" y="15.500" fill="#fff" fontFamily="Liberation Sans" fontWeight="700" fontSize="12">S</text><text x="13" y="14.500" fill="#fff" fontFamily="Liberation Sans" fontWeight="700" fontSize="10">W</text><text x="5.500" y="23.500" fill="#fff" stroke="#000" strokeWidth="2" paintOrder="stroke" fontFamily="Noto Sans" fontWeight="700" fontSize="8" textLength="18">2021</text></svg>
        </TaskApp>
      </div>
      <svg className="ml-[140px]" width="24" height="24" viewBox="0 0 24 24"><circle cx="11.500" cy="11" r="10" fill="#1790d0" stroke="#fff" strokeWidth="1.600" /><path d="M8 8.500Q8 5 11.500 5T15 8Q15 10 13 11Q11.700 12 11.700 14" fill="none" stroke="#fff" strokeWidth="2.500" /><path d="M11.700 15.500V18" stroke="#fff" strokeWidth="2.500" /><circle cx="18" cy="17.500" r="4.700" fill="#f5a623" /><path d="M18 15V16M18 17V20.500" stroke="#fff" strokeWidth="1.500" /></svg>
      <svg className="ml-[88px]" width="23" height="22" viewBox="0 0 23 22"><defs><linearGradient id="sun" x1="0" x2="0" y1="0" y2="1"><stop offset="0" stopColor="#fbb900" /><stop offset="1" stopColor="#f27a0a" /></linearGradient></defs><circle cx="9.500" cy="10" r="9" fill="url(#sun)" /><circle cx="18" cy="18" r="3.300" fill="#e01b32" /></svg>
      <span className="ml-[7px] w-[36px] pt-[2px] text-[13px] tracking-[-0.200px]">78°F</span>
      <span className="w-[54px] pt-[2px] text-[13px]">Sunny</span>
      <svg width="13" height="8" viewBox="0 0 13 8"><path d="M1 7L6.500 1.500L12 7" fill="none" stroke="#fff" strokeWidth="1.300" /></svg>
      <svg className="ml-[13px]" width="12" height="16" viewBox="0 0 12 16" fill="none" stroke="#fff" strokeWidth="1.200"><path d="M2 2Q5 -0.500 8.500 2M2 14Q5 16.500 8.500 14M9.500 6.500L11.400 5V11L9.500 9.500" /><rect x="0.600" y="4.200" width="8.500" height="7.600" rx="1.200" /></svg>
      <svg className="ml-[12px]" width="13" height="14" viewBox="0 0 13 14" fill="none" stroke="#fff" strokeWidth="1.200"><circle cx="11" cy="12" r="1" fill="#fff" /><path d="M7.500 13Q8 9.500 12 8.500M4.500 13Q5 7 12 5.500" /><path d="M1 13Q2 4 12 1.500" stroke="#aaa" /></svg>
      <svg className="ml-[8px]" width="17" height="13" viewBox="0 0 17 13" fill="none" stroke="#fff" strokeWidth="1.100"><path d="M0.700 4.500H3L6.500 1V12L3 8.500H0.700ZM9 4.500Q10.500 6.500 9 8.500M11.300 2.800Q13.700 6.500 11.300 10.200" /><path d="M13.700 1Q17 6.500 13.700 12" stroke="#999" /></svg>
      <div className="ml-[4px] flex w-[62px] flex-col items-center pt-px text-[11.500px] leading-[18px] tracking-[-0.300px]"><span>6:09 PM</span><span>9/13/2022</span></div>
      <svg className="ml-[12px]" width="26" height="26" viewBox="0 0 26 26"><path d="M1 2H17V15H7L3.500 18V15H1Z" fill="#fff" /><path d="M4 5.500H14M4 8.500H14M4 11.500H10" stroke="#343328" /><circle cx="16.500" cy="17.500" r="8" fill="#3a3a36" stroke="#999" /><text x="13.500" y="21.500" fill="#fff" fontFamily="Noto Sans" fontSize="11">3</text></svg>
      <div className="ml-auto mr-[4px] h-[40px] w-px bg-[#777]" />
    </footer>
  );
}

export default function App() {
  return (
    <div className="relative flex h-[768px] w-[1366px] flex-col overflow-hidden bg-white font-['Noto_Sans',sans-serif]">
      <TitleBar />
      <main className="flex h-[674px] shrink-0">
        <LeftEdge />
        <div className="flex w-[884px] flex-col border-r border-[#8a8a8a]">
          <Tabs />
          <ViewToolbar />
          <div className="mt-0 flex h-[606px] w-[883px]">
            <Tube />
            <TaskPane />
          </div>
          <div className="h-[16px] border-t border-b border-[#808080] bg-[#f7f7f7]" />
        </div>
      </main>
      <StatusBar />
      <Taskbar />
      <div className="absolute inset-x-0 top-0 h-[728px] overflow-hidden">
        <Dialog />
      </div>
    </div>
  );
}
